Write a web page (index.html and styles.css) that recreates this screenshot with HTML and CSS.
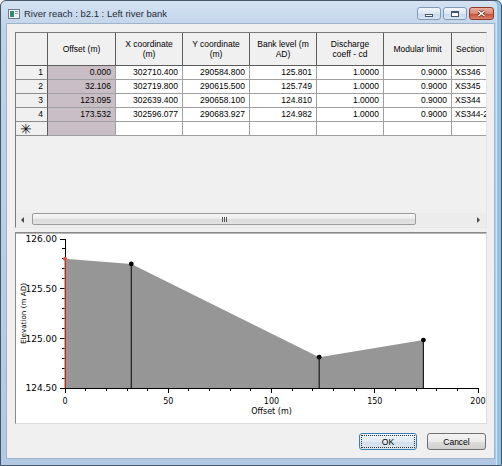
FILE: index.html
```html
<!DOCTYPE html>
<html lang="en">
<head>
<meta charset="UTF-8">
<title>River reach : b2.1 : Left river bank</title>
<link rel="stylesheet" href="styles.css">
</head>
<body>

<div class="window">
  <div class="titlebar">
    <svg class="app-icon" width="12" height="10" viewBox="0 0 12 10">
      <rect x="0.5" y="0.5" width="11" height="9" fill="#eef2f6" stroke="#6d7c8c"/>
      <rect x="2" y="2" width="4" height="6" fill="#2f8a6e"/>
      <rect x="7" y="2" width="3" height="1" fill="#8a98a8"/>
      <rect x="7" y="4" width="3" height="1" fill="#8a98a8"/>
    </svg>
    <span class="title">River reach : b2.1 : Left river bank</span>
    <div class="caption-buttons">
      <span class="cap-btn min"><i></i></span>
      <span class="cap-btn max"><i></i></span>
      <span class="cap-btn close">
        <svg width="9" height="7" viewBox="0 0 9 7">
          <path d="M1.5 1 L7.5 6 M7.5 1 L1.5 6" stroke="#6b2418" stroke-width="3"/>
          <path d="M1.5 1 L7.5 6 M7.5 1 L1.5 6" stroke="#fff" stroke-width="1.6"/>
        </svg>
      </span>
    </div>
  </div>

  <div class="client">
    <div class="grid-panel">
      <div class="grid-body">
        <table class="grid">
          <tr>
            <th class="w-head"></th>
            <th class="w-offset">Offset (m)</th>
            <th class="w-num">X coordinate<br>(m)</th>
            <th class="w-num">Y coordinate<br>(m)</th>
            <th class="w-num">Bank level (m<br>AD)</th>
            <th class="w-num">Discharge<br>coeff - cd</th>
            <th class="w-mod">Modular limit</th>
            <th class="w-sec left">Section</th>
          </tr>
          <tr>
            <td class="rowhead">1</td>
            <td class="offset">0.000</td>
            <td>302710.400</td>
            <td>290584.800</td>
            <td>125.801</td>
            <td>1.0000</td>
            <td>0.9000</td>
            <td class="text">XS346</td>
          </tr>
          <tr>
            <td class="rowhead">2</td>
            <td class="offset">32.106</td>
            <td>302719.800</td>
            <td>290615.500</td>
            <td>125.749</td>
            <td>1.0000</td>
            <td>0.9000</td>
            <td class="text">XS345</td>
          </tr>
          <tr>
            <td class="rowhead">3</td>
            <td class="offset">123.095</td>
            <td>302639.400</td>
            <td>290658.100</td>
            <td>124.810</td>
            <td>1.0000</td>
            <td>0.9000</td>
            <td class="text">XS344</td>
          </tr>
          <tr>
            <td class="rowhead">4</td>
            <td class="offset">173.532</td>
            <td>302596.077</td>
            <td>290683.927</td>
            <td>124.982</td>
            <td>1.0000</td>
            <td>0.9000</td>
            <td class="text">XS344-2</td>
          </tr>
          <tr>
            <td class="rowhead newrow">✳</td>
            <td class="offset"></td>
            <td></td>
            <td></td>
            <td></td>
            <td></td>
            <td></td>
            <td class="text"></td>
          </tr>
        </table>
      </div>
      <div class="hscroll">
        <span class="arrow left"></span>
        <div class="track">
          <div class="thumb"><span class="grip"></span></div>
        </div>
        <span class="arrow right"></span>
      </div>
    </div>

    <div class="chart-panel">
      <svg class="chart" width="470" height="190" viewBox="-1 -1 470 190">
        <polygon points="48,24.8 114.3,29.9 302.2,123.2 406.4,106.1 406.4,154 48,154" fill="#969696"/>

        <g stroke="#000" stroke-width="1" shape-rendering="crispEdges" fill="none">
          <path d="M48 5 V154 H461"/>
          <!-- y ticks -->
          <path d="M43 5 H48 M45 14.9 H48 M45 24.9 H48 M45 34.8 H48 M45 44.7 H48
                   M43 54.7 H48 M45 64.6 H48 M45 74.5 H48 M45 84.5 H48 M45 94.4 H48
                   M43 104.3 H48 M45 114.3 H48 M45 124.2 H48 M45 134.1 H48 M45 144.1 H48
                   M43 154 H48"/>
          <!-- x ticks -->
          <path d="M48 154 V159 M68.7 154 V157 M89.3 154 V157 M110 154 V157 M130.6 154 V157
                   M151.3 154 V159 M171.9 154 V157 M192.6 154 V157 M213.2 154 V157 M233.9 154 V157
                   M254.5 154 V159 M275.2 154 V157 M295.8 154 V157 M316.5 154 V157 M337.1 154 V157
                   M357.8 154 V159 M378.4 154 V157 M399.1 154 V157 M419.7 154 V157 M440.4 154 V157
                   M461 154 V159"/>
        </g>

        <g stroke="#1e1e1e" stroke-width="1.2">
          <line x1="114.3" y1="29.9" x2="114.3" y2="154"/>
          <line x1="302.2" y1="123.2" x2="302.2" y2="154"/>
          <line x1="406.4" y1="106.1" x2="406.4" y2="154"/>
        </g>
        <line x1="48" y1="24.8" x2="48" y2="154" stroke="#f2603f" stroke-width="1.3"/>
        <circle cx="48" cy="24.8" r="2" fill="#ee4b3b"/>
        <circle cx="114.3" cy="29.9" r="2.4" fill="#000"/>
        <circle cx="302.2" cy="123.2" r="2.4" fill="#000"/>
        <circle cx="406.4" cy="106.1" r="2.4" fill="#000"/>

        <g class="tick-label y-label">
          <text x="40" y="8.2">126.00</text>
          <text x="40" y="57.9">125.50</text>
          <text x="40" y="107.5">125.00</text>
          <text x="40" y="157.2">124.50</text>
        </g>
        <g class="tick-label x-label">
          <text x="48" y="170">0</text>
          <text x="151.3" y="170">50</text>
          <text x="254.5" y="170">100</text>
          <text x="357.8" y="170">150</text>
          <text x="461" y="170">200</text>
        </g>
        <text class="axis-title" x="254.5" y="180">Offset (m)</text>
        <text class="axis-title vertical" transform="translate(8.5 79.5) rotate(-90)">Elevation (m AD)</text>
      </svg>
    </div>

    <div class="buttons">
      <button type="button" class="btn default">OK</button>
      <button type="button" class="btn">Cancel</button>
    </div>
  </div>
</div>

</body>
</html>
```

FILE: styles.css
```css
body {
  margin: 0;
  font-family: "Liberation Sans", Arial, sans-serif;
}
.window {
  width: 502px;
  height: 466px;
  box-sizing: border-box;
  border: 1px solid #46566a;
  border-radius: 6px 6px 0 0;
  background: linear-gradient(#d4e2f2, #bfd2e8 30px, #b3c8e2);
  box-shadow: inset -4px 0 0 #8ec2e6, inset -5px 0 0 #d6e5f2;
  display: flex;
  flex-direction: column;
}
.titlebar {
  height: 23px;
  display: flex;
  align-items: center;
  padding: 2px 7px 0 7px;
  box-sizing: border-box;
}
.app-icon {
  margin-right: 4px;
}
.title {
  font-size: 9.5px;
  color: #1e2a38;
}
.caption-buttons {
  margin-left: auto;
  display: flex;
  gap: 2px;
}
.cap-btn {
  width: 24px;
  height: 13px;
  box-sizing: border-box;
  border: 1px solid #8298b3;
  border-radius: 3px;
  background: linear-gradient(#f0f5fa, #dbe6f2 50%, #c6d7eb 51%, #d9e5f3);
  display: flex;
  align-items: center;
  justify-content: center;
}
.cap-btn.min i {
  width: 8px;
  height: 3px;
  box-sizing: border-box;
  border: 1px solid #46566a;
  background: #fff;
  margin-top: 3px;
}
.cap-btn.max i {
  width: 8px;
  height: 6px;
  box-sizing: border-box;
  border: 1px solid #46566a;
  border-top-width: 2px;
  background: #fff;
}
.cap-btn.close {
  width: 25px;
  border-color: #8d3c2c;
  background: linear-gradient(#eab0a2, #d98570 50%, #c84a32 51%, #d9826c);
}
.client {
  flex: 1;
  margin: 0 7px 7px 6px;
  background: #f0f0f0;
  box-shadow: 0 0 0 1px #9db2cb;
  padding: 8px 7px 8px 8px;
  display: flex;
  flex-direction: column;
}
.grid-panel {
  height: 196px;
  box-sizing: border-box;
  border: 1px solid #e6e6e6;
  border-top-color: #7a7a7a;
  border-left-color: #7a7a7a;
  display: flex;
  flex-direction: column;
}
.grid-body {
  flex: 1;
  overflow: hidden;
  background: #f0f0f0;
}
.grid {
  border-collapse: separate;
  border-spacing: 0;
  table-layout: fixed;
  width: 503px;
  font-size: 8.5px;
  color: #000;
}
.grid th, .grid td {
  box-sizing: border-box;
  padding: 0 4px;
  border-right: 1px solid #a0a0a0;
  border-bottom: 1px solid #a0a0a0;
  white-space: nowrap;
  overflow: hidden;
}
.grid th {
  height: 33px;
  background: #f0f0f0;
  font-weight: normal;
  text-align: center;
  line-height: 10px;
  border-right-color: #5c5c5c;
  border-bottom-color: #5c5c5c;
}
.grid th.left {
  text-align: left;
}
.w-head { width: 32px; }
.w-offset { width: 68px; }
.w-num { width: 67px; }
.w-mod { width: 68px; }
.w-sec { width: 67px; }
.grid td {
  height: 14px;
  line-height: 13px;
  background: #fff;
  text-align: right;
}
.grid td.rowhead {
  background: #f0f0f0;
  border-right-color: #5c5c5c;
  border-bottom-color: #8c8c8c;
}
.grid td.newrow {
  text-align: left;
  padding-left: 4px;
  font-family: "DejaVu Sans", sans-serif;
  font-size: 14px;
  line-height: 12px;
  color: #111;
}
.grid td.offset {
  background: #c9bec6;
}
.grid td.text {
  text-align: left;
  padding-left: 3px;
}
.hscroll {
  height: 13px;
  margin-bottom: 1px;
  display: flex;
  align-items: center;
  background: #ececec;
}
.arrow {
  width: 16px;
  height: 13px;
  position: relative;
}
.arrow::after {
  content: "";
  position: absolute;
  top: 4px;
  border-top: 3px solid transparent;
  border-bottom: 3px solid transparent;
}
.arrow.left::after {
  left: 5px;
  border-right: 3px solid #4a4a4a;
}
.arrow.right::after {
  right: 6px;
  border-left: 3px solid #4a4a4a;
}
.track {
  flex: 1;
  height: 13px;
}
.thumb {
  width: 384px;
  height: 12px;
  box-sizing: border-box;
  border: 1px solid #9a9a9a;
  border-radius: 2px;
  background: linear-gradient(#f6f6f6, #ececec 50%, #dcdcdc 51%, #e2e2e2);
  display: flex;
  align-items: center;
  justify-content: center;
}
.grip {
  width: 5px;
  height: 5px;
  background: linear-gradient(90deg, #555 1px, transparent 1px, transparent 2px, #555 2px, #555 3px, transparent 3px, transparent 4px, #555 4px);
}
.chart-panel {
  margin-top: 4px;
  height: 192px;
  box-sizing: border-box;
  border: 1px solid #dcdcdc;
  border-top-color: #8a8a8a;
  border-left-color: #8a8a8a;
  background: #fff;
  box-shadow: inset 0 1px 0 #b4b4b4;
}
.chart {
  display: block;
}
.tick-label {
  font-family: "DejaVu Sans", sans-serif;
  fill: #000;
}
.y-label {
  font-size: 9px;
  text-anchor: end;
}
.x-label {
  font-size: 8px;
  text-anchor: middle;
}
.axis-title {
  font-family: "DejaVu Sans", sans-serif;
  font-size: 8px;
  text-anchor: middle;
  fill: #000;
}
.axis-title.vertical {
  font-size: 7.2px;
}
.buttons {
  margin-top: 9px;
  margin-right: 1px;
  display: flex;
  justify-content: flex-end;
  gap: 10px;
}
.btn {
  width: 59px;
  height: 17px;
  padding: 0;
  font-family: "Liberation Sans", Arial, sans-serif;
  font-size: 8.5px;
  color: #000;
  border: 1px solid #707070;
  border-radius: 3px;
  background: linear-gradient(#f3f3f3, #ebebeb 50%, #dddddd 51%, #d0d0d0);
}
.btn.default {
  width: 58px;
  border-color: #3c7fb1;
  background: linear-gradient(#eef4f9, #e2ebf3 50%, #d2e0ec 51%, #dbe6f0);
  outline: 1px dotted #333;
  outline-offset: -3px;
}
```
